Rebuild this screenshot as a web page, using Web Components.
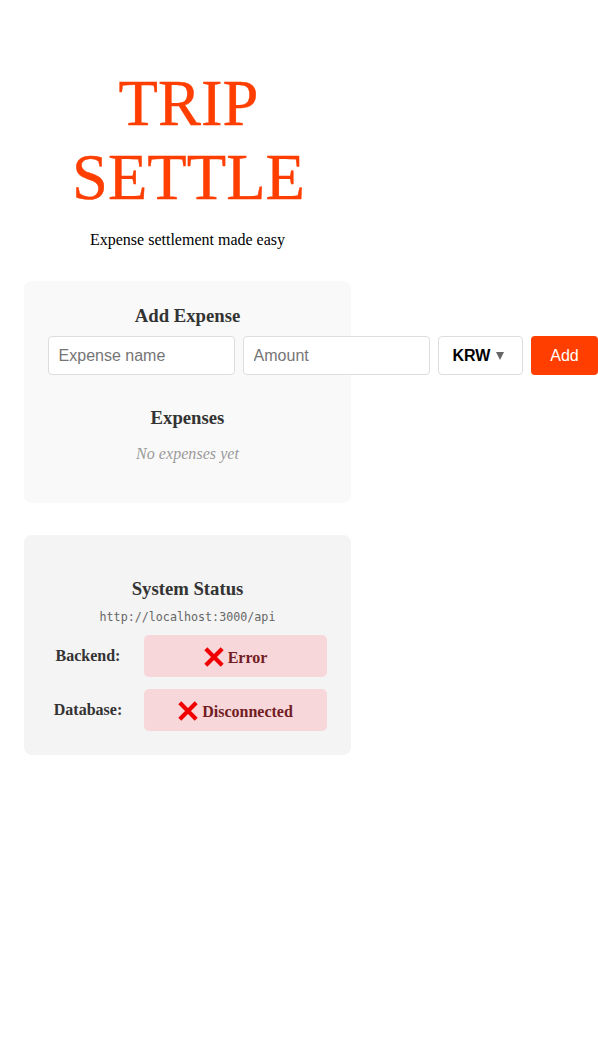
<!DOCTYPE html>
<html lang="en">
<head>
<meta charset="utf-8">
<title>Trip Settle</title>
<style>
html{overflow:hidden}
body{margin:0;background:#fff;color:#000;font:16px/18px "Liberation Serif","Times New Roman",serif}
</style>
</head>
<body>
<trip-app></trip-app>
<script>
const define = (name, html) => customElements.define(name, class extends HTMLElement {
  constructor() {
    super();
    const t = document.createElement('template');
    t.innerHTML = html;
    this.attachShadow({mode: 'open'}).append(t.content.cloneNode(true));
  }
});

define('trip-header', `<style>
:host{display:block;text-align:center}
h1{margin:0;padding-left:2px;font-size:64.5px;line-height:74px;font-weight:400;color:#ff3e00;-webkit-text-stroke:.4px #ff3e00}
p{margin:16px 0 0;line-height:18px}
</style><h1>TRIP SETTLE</h1><p>Expense settlement made easy</p>`);

define('panel-card', `<style>
:host{display:block;box-sizing:border-box;border-radius:8px;padding:24px;background:var(--card-bg,#f9f9f9)}
</style><slot></slot>`);

define('section-title', `<style>
:host{display:block;text-align:center;color:#333;font-weight:700;font-size:18.72px;line-height:22px}
</style><slot></slot>`);

define('expense-form', `<style>
:host{display:flex;gap:8px;width:max-content}
input,button{box-sizing:border-box;height:39px;margin:0;border-radius:4px;font:16px/19px "Liberation Sans",Arial,sans-serif}
input{width:187px;padding:9px 9px 9px 9.6px;border:1px solid #ddd;background:#fff;outline:0}
input::placeholder{color:#757575;opacity:1}
.cur{width:85px;display:flex;align-items:center;padding:0 13px 0 13.4px;border:1px solid #ddd;background:#fff;color:#000;font-weight:700}
.cur svg{margin-left:5.6px;margin-top:1px}
.add{width:67px;border:0;padding:0;background:#ff3e00;color:#fff}
</style>
<input placeholder="Expense name"><input placeholder="Amount">
<button class="cur">KRW<svg width="8" height="8" viewBox="0 0 8 8"><path d="M0 0H8L4 8Z" fill="#666"/></svg></button>
<button class="add">Add</button>`);

define('status-row', `<style>
:host{display:grid;grid-template-columns:80px 183px;gap:16px;align-items:center;text-align:center;font-weight:700;color:#333}
.badge{display:flex;justify-content:center;align-items:center;gap:4px;height:42px;border-radius:5px;background:#f8d7da;color:#721c24}
.badge span{padding-top:4px}
.badge svg{margin-top:2px}
</style>
<slot name="label"></slot>
<div class="badge"><svg width="20" height="20" viewBox="0 0 20 20"><path d="M1.8 1.8L18.2 18.2M18.2 1.8L1.8 18.2" stroke="#f00000" stroke-width="4.2" fill="none"/></svg><span><slot></slot></span></div>`);

define('trip-app', `<style>
:host{display:block;box-sizing:border-box;width:375px;padding:67px 24px 0}
.expenses{height:222px;margin-top:32px}
expense-form{margin-top:9px}
.list{margin-top:32px}
.empty{margin:16px 0 0;text-align:center;font-style:italic;color:#999;letter-spacing:.05px;line-height:18px}
.status{--card-bg:#f4f4f4;height:220px;margin-top:32px;padding-top:43px}
.url{margin:9px 0;text-align:center;color:#666;font:11.7px/17px "DejaVu Sans Mono",monospace}
status-row + status-row{margin-top:12px}
</style>
<trip-header></trip-header>
<panel-card class="expenses">
<section-title>Add Expense</section-title>
<expense-form></expense-form>
<section-title class="list">Expenses</section-title>
<p class="empty">No expenses yet</p>
</panel-card>
<panel-card class="status">
<section-title>System Status</section-title>
<p class="url">http://localhost:3000/api</p>
<status-row><span slot="label">Backend:</span>Error</status-row>
<status-row><span slot="label">Database:</span>Disconnected</status-row>
</panel-card>`);
</script>
</body>
</html>
